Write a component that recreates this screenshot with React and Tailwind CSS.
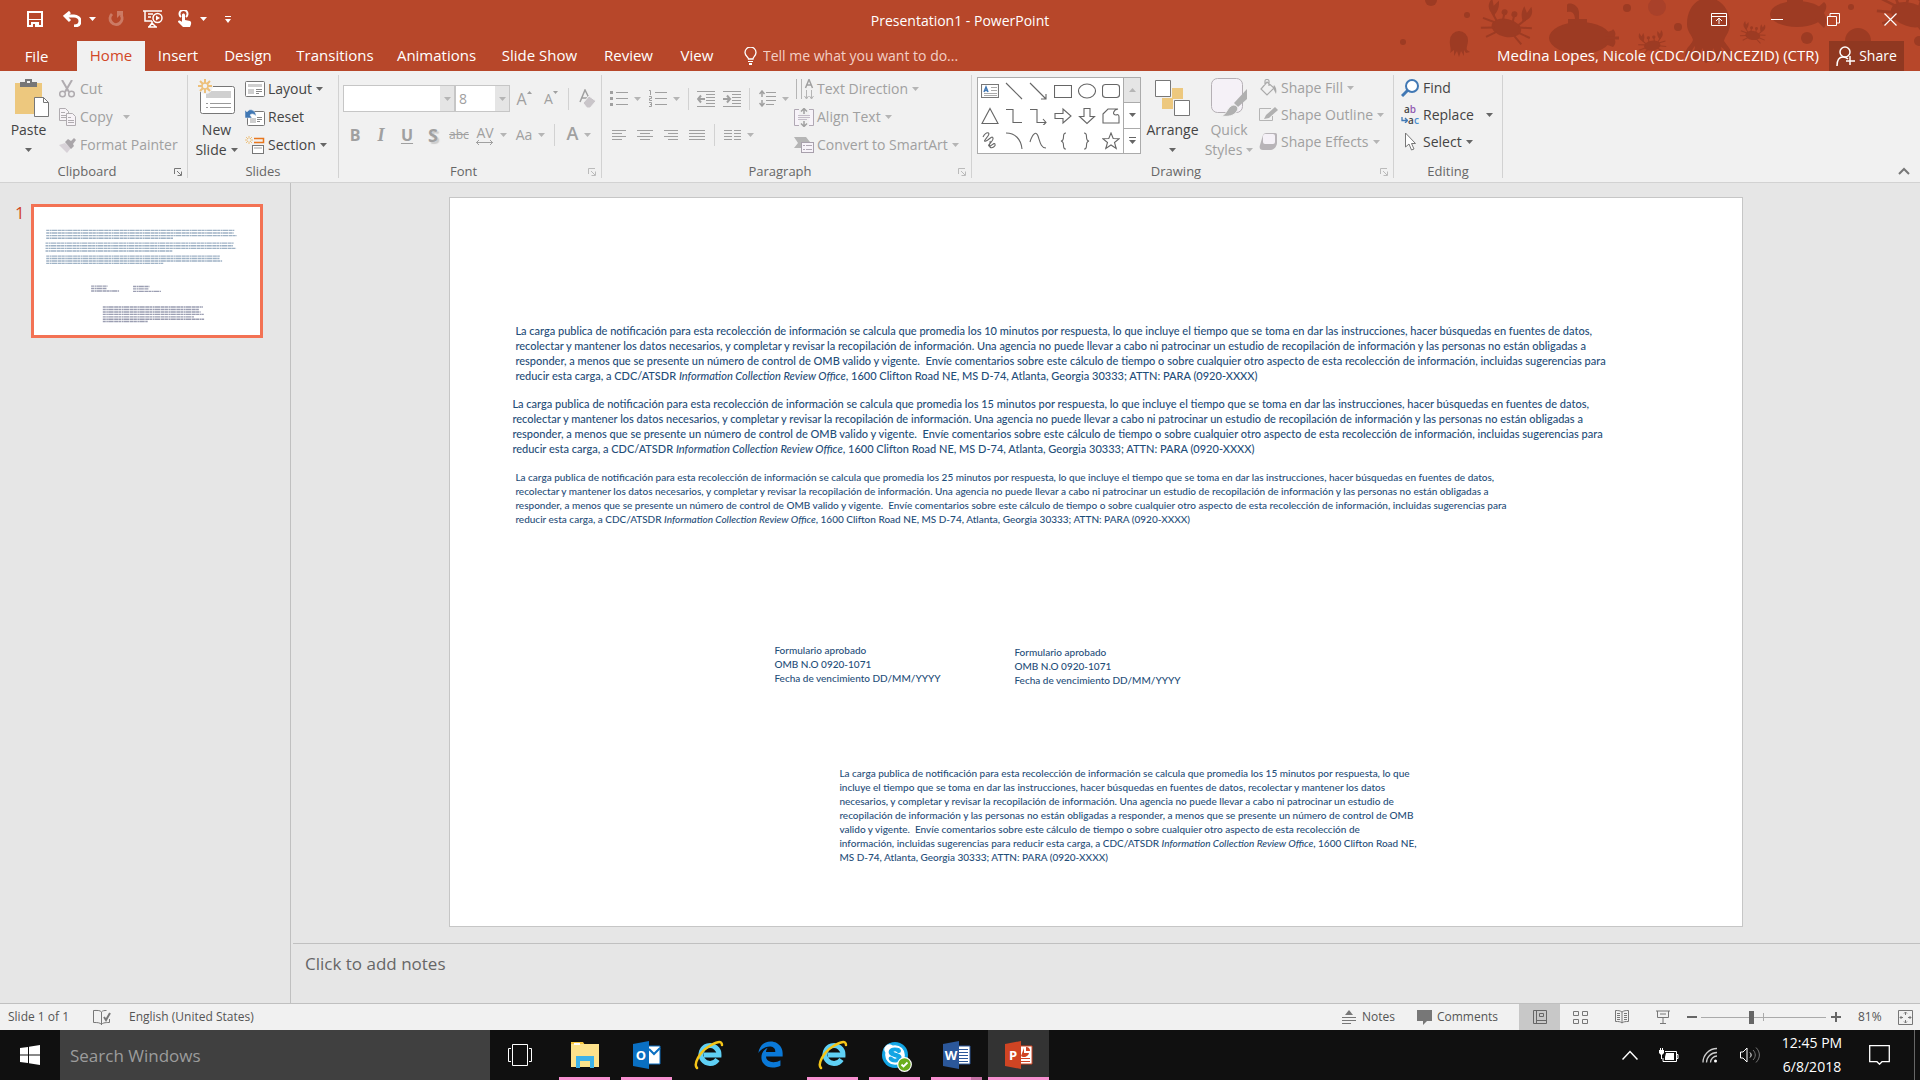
import { FaEdgeLegacy, FaSkype } from 'react-icons/fa';

const tabs = [
  { name: 'Home', width: 'w-[68px]', active: true },
  { name: 'Insert', width: 'w-[66px]' },
  { name: 'Design', width: 'w-[74px]' },
  { name: 'Transitions', width: 'w-[100px]' },
  { name: 'Animations', width: 'w-[103px]' },
  { name: 'Slide Show', width: 'w-[103px]' },
  { name: 'Review', width: 'w-[75px]' },
  { name: 'View', width: 'w-[62px]' },
];

const office = <i>Information Collection Review Office</i>;

const wideLines = minutes => [
  `La carga publica de notificación para esta recolección de información se calcula que promedia los ${minutes} minutos por respuesta, lo que incluye el tiempo que se toma en dar las instrucciones, hacer búsquedas en fuentes de datos,`,
  'recolectar y mantener los datos necesarios, y completar y revisar la recopilación de información. Una agencia no puede llevar a cabo ni patrocinar un estudio de recopilación de información y las personas no están obligadas a',
  'responder, a menos que se presente un número de control de OMB valido y vigente.  Envíe comentarios sobre este cálculo de tiempo o sobre cualquier otro aspecto de esta recolección de información, incluidas sugerencias para',
  <>reducir esta carga, a CDC/ATSDR {office}, 1600 Clifton Road NE, MS D-74, Atlanta, Georgia 30333; ATTN: PARA (0920-XXXX)</>,
];

const narrowLines = [
  'La carga publica de notificación para esta recolección de información se calcula que promedia los 15 minutos por respuesta, lo que',
  'incluye el tiempo que se toma en dar las instrucciones, hacer búsquedas en fuentes de datos, recolectar y mantener los datos',
  'necesarios, y completar y revisar la recopilación de información. Una agencia no puede llevar a cabo ni patrocinar un estudio de',
  'recopilación de información y las personas no están obligadas a responder, a menos que se presente un número de control de OMB',
  'valido y vigente.  Envíe comentarios sobre este cálculo de tiempo o sobre cualquier otro aspecto de esta recolección de',
  <>información, incluidas sugerencias para reducir esta carga, a CDC/ATSDR {office}, 1600 Clifton Road NE,</>,
  'MS D-74, Atlanta, Georgia 30333; ATTN: PARA (0920-XXXX)',
];

const formLines = ['Formulario aprobado', 'OMB N.O 0920-1071', 'Fecha de vencimiento DD/MM/YYYY'];

// x, y, width of every text line on the slide, for the thumbnail
const thumbLines = [
  [70, 134, 1077], [70, 149, 1073], [70, 164, 1091], [70, 179, 726],
  [66, 207, 1077], [66, 222, 1073], [66, 237, 1091], [66, 252, 726],
  [70, 281, 994], [70, 295, 992], [70, 309, 1007], [70, 323, 670],
  [327, 453, 94], [327, 467, 90], [327, 481, 160],
  [567, 455, 94], [567, 469, 90], [567, 483, 160],
  [394, 573, 573], [394, 587, 550], [394, 601, 560], [394, 615, 578], [394, 629, 522], [394, 643, 580], [394, 656, 257],
];

function Svg({ w, h, children, className = '' }) {
  return (
    <svg width={w} height={h} viewBox={`0 0 ${w} ${h}`} fill="none" aria-hidden="true" className={`shrink-0 ${className}`}>
      {children}
    </svg>
  );
}

function Caret({ className = 'text-[#666]' }) {
  return (
    <Svg w={7} h={4} className={className}>
      <path d="M0 0h7L3.5 4z" fill="currentColor" />
    </Svg>
  );
}

/* ---------- Title bar ---------- */

function Crab({ x, y, s = 1, r = 0 }) {
  return (
    <g transform={`translate(${x} ${y}) rotate(${r}) scale(${s})`}>
      <ellipse cx="0" cy="3" rx="15" ry="9" />
      <circle cx="-5" cy="-12" r="3" />
      <circle cx="5" cy="-12" r="3" />
      <path d="M-14-6c-8-4-10-10-6-17l3 7 4-6c2 6 1 10-1 14zM14-6c8-4 10-10 6-17l-3 7-4-6c-2 6-1 10 1 14z" />
      <path d="M-5-12v8M5-12v8M-12 0l-13-2M-12 5l-13 3M-9 9l-9 7M12 0l13-2M12 5l13 3M9 9l9 7M-17-9l6 7M17-9l-6 7" fill="none" stroke="currentColor" strokeWidth="2" />
    </g>
  );
}

function SeaLife() {
  return (
    <svg width="520" height="71" viewBox="0 0 520 71" fill="currentColor" aria-hidden="true" className="absolute right-0 top-0 text-[#9d3b23]">
      <circle cx="31" cy="0" r="6" />
      <circle cx="3" cy="42" r="3" />
      <circle cx="67" cy="15" r="3" />
      <path d="M50 40a9 9 0 0 1 18 0c0 5-2 7-1 10l3 2-4 1-2-3v6l-3-5-2 6-2-6-3 5v-6l-4 3c2-4-1-8 0-13z" />
      <Crab x={107} y={25} r={12} />
      <ellipse cx="180" cy="38" rx="31" ry="16" />
      <path d="M168 19h19v8h-19zM167 12V5c0-3 11-2 12 7v8h-4c0-7-3-9-8-8zM205 33l8-3 2 8-2 9-8-3zM213 29c3 3 3 6 1 9 2 3 2 6-1 9-2-3-2-6 0-9-2-3-2-6 0-9z" />
      <path d="M205 38h14" stroke="currentColor" strokeWidth="3" />
      <circle cx="227" cy="8" r="4" />
      <Crab x={252} y={44} s={0.55} r={-8} />
      <circle cx="257" cy="7" r="9" className="text-[#a9412a]" />
      <circle cx="278" cy="27" r="4" />
      <path d="M287 24c0-14 8-26 21-26s22 12 22 26c0 8-5 12-6 17 4 6 8 8 8 17-6 0-6-9-11-11 2 8 2 14-4 16-3-5 0-10-4-15-1 8-2 13-7 15-5-3-2-9-3-15-4 5-4 13-11 12-1-7 3-9 3-14-4 4-3 10-10 11 0-10 6-11 8-17-1-5-6-8-6-16z" />
      <Crab x={353} y={34} s={0.5} r={10} />
      <ellipse cx="397" cy="14" rx="27" ry="13" />
      <path d="M387 0h16v4h-16zM415 10l9-8c4 3 2 8 0 11 3 5 3 10 0 15l-9-9z" />
      <circle cx="407" cy="38" r="6" />
      <circle cx="451" cy="7" r="3" />
      <path d="M445 41a13 13 0 0 1 26 0z" />
      <Crab x={511} y={11} s={1.3} r={18} />
      <circle cx="519" cy="41" r="5" />
    </svg>
  );
}

function TitleBar() {
  return (
    <div className="relative flex h-[41px] items-center justify-between">
      <div className="flex items-center pl-[27px] pb-[3px] text-white">
        <button aria-label="Save">
          <Svg w={16} h={16}>
            <path d="M1 1h14v14H1z" stroke="#fff" strokeWidth="2" />
            <path d="M1 8h14v1H1zM4 11h8v4H4z" fill="#fff" />
            <path d="M6 13h2v3H6z" fill="#b7472a" />
          </Svg>
        </button>
        <button aria-label="Undo" className="ml-5">
          <Svg w={18} h={16}>
            <path d="M7 1L2 5l5 5M2 5h9c3 0 6 2 6 5s-2 5-6 5" stroke="#fff" strokeWidth="3" />
          </Svg>
        </button>
        <button aria-label="Undo history" className="ml-2"><Caret className="text-white" /></button>
        <button aria-label="Repeat" className="ml-3" disabled>
          <Svg w={16} h={16} className="text-[#cc7a64]">
            <path d="M4 3a6 6 0 1 0 9 1" stroke="currentColor" strokeWidth="3" />
            <path d="M9 0h6v6l-3-2-3 3z" fill="currentColor" />
          </Svg>
        </button>
        <button aria-label="Start from beginning" className="ml-[19px]">
          <Svg w={20} h={18}>
            <path d="M0 1h19M2 1v10h7M5 4h5M5 7h3M9 11v2M5 17h9M9 13l-3 4M9 13l4 4" stroke="#fff" strokeWidth="1.5" />
            <circle cx="14.500" cy="8" r="4.500" stroke="#fff" strokeWidth="1.500" />
            <path d="M13 5.500v5l4-2.500z" fill="#fff" />
          </Svg>
        </button>
        <button aria-label="Touch/Mouse mode" className="ml-[15px]">
          <Svg w={14} h={18}>
            <path d="M3 7a4 4 0 1 1 5 0" stroke="#fff" strokeWidth="2" />
            <path d="M4 5c0-2 3-2 3 0v5l5 1c2 1 1 4 0 6H5L0 12c0-2 2-2 4 0z" fill="#fff" />
          </Svg>
        </button>
        <button aria-label="Touch/Mouse options" className="ml-2"><Caret className="text-white" /></button>
        <button aria-label="Customize Quick Access Toolbar" className="ml-[18px]">
          <Svg w={6} h={7}>
            <path d="M0 0h6v1H0zM0 3h6L3 7z" fill="#fff" />
          </Svg>
        </button>
      </div>
      <div className="absolute left-1/2 top-[11px] -translate-x-1/2 text-sm text-white">Presentation1 - PowerPoint</div>
      <div className="flex items-center gap-[44px] pb-[3px] pr-[23px]">
        <button aria-label="Ribbon display options">
          <Svg w={16} h={13}>
            <path d="M.5.5h15v12H.5zM.5 3.500h15M8 5v6M5 8l3-3 3 3" stroke="#fff" />
          </Svg>
        </button>
        <button aria-label="Minimize">
          <Svg w={12} h={13}><path d="M0 6.500h12" stroke="#fff" /></Svg>
        </button>
        <button aria-label="Restore">
          <Svg w={13} h={13}><path d="M.5 3.500h9v9h-9zM3 3V.5h9.500V10H10" stroke="#fff" /></Svg>
        </button>
        <button aria-label="Close">
          <Svg w={13} h={13}><path d="M.5.5l12 12M12.500.5l-12 12" stroke="#fff" strokeWidth="1.200" /></Svg>
        </button>
      </div>
    </div>
  );
}

function TabBar() {
  return (
    <nav className="relative flex h-[30px] text-[15px] text-white">
      <button className="w-[77px] pr-1">File</button>
      {tabs.map(tab => (
        <button
          key={tab.name}
          className={`${tab.width} shrink-0 whitespace-nowrap pb-[2px] ${tab.active ? 'bg-[#f1f1f1] text-[#d24726]' : ''}`}
        >
          {tab.name}
        </button>
      ))}
      <label className="ml-4 flex items-center gap-[5px]">
        <Svg w={14} h={18}>
          <path d="M4.500 12c0-2-3.500-3-3.500-6.500a5.500 5.500 0 0 1 11 0C12 9 9 10 9 12z" stroke="#fff" strokeWidth="1.300" />
          <path d="M4 14h5v1H4zM5 16h3v2H5z" fill="#fff" />
        </Svg>
        <input
          placeholder="Tell me what you want to do..."
          className="w-56 bg-transparent text-sm outline-none placeholder:text-[#f3d0c6]"
        />
      </label>
      <div className="ml-auto flex items-center">
        <span className="whitespace-nowrap pb-[2px]">Medina Lopes, Nicole (CDC/OID/NCEZID) (CTR)</span>
        <button className="ml-[10px] mr-4 flex h-full w-[75px] items-center justify-center gap-1 bg-[#903821] text-sm">
          <Svg w={19} h={20}>
            <circle cx="9" cy="6" r="5" stroke="#fff" strokeWidth="1.500" />
            <path d="M1 20c0-5 2-9 6-9 2 0 3 0 5 2M14 10v9M10 15h9" stroke="#fff" strokeWidth="1.500" />
          </Svg>
          Share
        </button>
      </div>
    </nav>
  );
}

/* ---------- Ribbon ---------- */

function Group({ label, width, launcher, children }) {
  return (
    <>
      <section className={`flex shrink-0 flex-col ${width}`} aria-label={label}>
        <div className="flex h-[90px] shrink-0">{children}</div>
        <div className="flex h-[22px] items-center">
          <span className="flex-1 text-center text-[13px] text-[#666]">{label}</span>
          {launcher && (
            <button aria-label={`${label} settings`} className={`mr-[5px] ${launcher}`}>
              <Svg w={8} h={8}>
                <path d="M.5 6V.5H7M3 3l4 4M7.500 3.500v4h-4" stroke="currentColor" />
              </Svg>
            </button>
          )}
        </div>
      </section>
      <div className="my-1 w-px shrink-0 bg-[#d2d2d2]" />
    </>
  );
}

function Item({ icon, label, caret, disabled, height = 'h-7', gap = 'gap-1' }) {
  return (
    <button disabled={disabled} className={`flex items-center whitespace-nowrap ${height} ${disabled ? 'text-[#a0a0a0]' : 'text-[#444]'}`}>
      <span className="mr-[3px] flex w-5 justify-center">{icon}</span>
      <span className={`flex items-center ${gap}`}>
        {label}
        {caret && <Caret className={disabled ? 'text-[#b5b5b5]' : 'text-[#666]'} />}
      </span>
    </button>
  );
}

function BigButton({ icon, top, bottom, width, disabled }) {
  return (
    <button disabled={disabled} className={`flex shrink-0 flex-col items-center pt-1 leading-5 ${width} ${disabled ? 'text-[#a0a0a0]' : 'text-[#444]'}`}>
      <span className="flex h-[45px] items-center">{icon}</span>
      <span>{top}</span>
      <span className="flex h-5 items-center gap-1">
        {bottom}
        <Caret className={disabled ? 'text-[#b5b5b5]' : 'text-[#666]'} />
      </span>
    </button>
  );
}

function Tool({ label, caret, width = 'w-[26px]', children }) {
  return (
    <button disabled aria-label={label} className={`flex h-full shrink-0 items-center justify-center gap-[6px] text-[#a0a0a0] ${width}`}>
      {children}
      {caret && <Caret className="text-[#b5b5b5]" />}
    </button>
  );
}

function Divider() {
  return <span className="mx-1 h-[22px] w-px shrink-0 bg-[#d2d2d2]" />;
}

function Lines({ d, w = 16, h = 14, children }) {
  return (
    <Svg w={w} h={h}>
      <path d={d} stroke="currentColor" />
      {children}
    </Svg>
  );
}

function ClipboardGroup() {
  return (
    <Group label="Clipboard" width="w-[187px]" launcher="text-[#777]">
      <BigButton
        width="w-[57px]"
        top="Paste"
        icon={
          <Svg w={40} h={38}>
            <g transform="translate(6 0)">
              <path d="M0 4h27v31H0z" fill="#edc87e" />
              <path d="M5 3h5V0h7v3h5v5H5z" fill="#777" />
              <path d="M12 2h3v2h-3z" fill="#f1f1f1" />
              <path d="M19.500 18.500h9l5 5v14h-14z" fill="#fff" stroke="#777" />
              <path d="M28.500 18.500v5h5" stroke="#777" />
            </g>
          </Svg>
        }
      />
      <div className="flex flex-col items-start pt-1">
        <Item
          disabled
          label="Cut"
          icon={
            <Svg w={16} h={18}>
              <path d="M3 0l7 12M13 0L6 12" stroke="#b0acb0" strokeWidth="2" />
              <circle cx="3.500" cy="14" r="2.800" stroke="#b0acb0" strokeWidth="1.500" />
              <circle cx="12.500" cy="14" r="2.800" stroke="#b0acb0" strokeWidth="1.500" />
            </Svg>
          }
        />
        <Item
          disabled
          caret
          gap="gap-[10px]"
          label="Copy"
          icon={
            <Svg w={17} h={18}>
              <path d="M.5.5h6l3 3v9h-9z" fill="#f7f3f7" stroke="#b0acb0" />
              <path d="M7.500 5.500h6l3 3v9h-9z" fill="#f7f3f7" stroke="#b0acb0" />
              <path d="M2 4.500h4M2 7.500h5M2 9.500h5M9 9.500h3M9 12.500h6M9 14.500h6" stroke="#b0acb0" />
            </Svg>
          }
        />
        <Item
          disabled
          label="Format Painter"
          icon={
            <Svg w={17} h={15}>
              <path d="M0 7l6-2 6 5-4 5z" fill="#d8d2d8" />
              <path d="M6 4l3-3 3 2 3-3 2 2-3 4 1 2-3 3z" fill="#aaa6aa" />
            </Svg>
          }
        />
      </div>
    </Group>
  );
}

function SlidesGroup() {
  return (
    <Group label="Slides" width="w-[150px]">
      <BigButton
        width="w-[57px]"
        top="New"
        bottom="Slide"
        icon={
          <Svg w={38} h={37}>
            <rect x="2.500" y="7.500" width="34" height="27" rx="2" fill="#fff" stroke="#777" />
            <path d="M8 12h25v7H8z" fill="#d0d0d0" />
            <path d="M8 24.500h2M12 24.500h21M8 28.500h2M12 28.500h21" stroke="#999" />
            <circle cx="7.500" cy="7.500" r="7.500" fill="#f1f1f1" />
            <path d="M7 0v14M0 7h14M2 2l10 10M12 2L2 12" stroke="#edc07a" strokeWidth="2" />
            <circle cx="7" cy="7" r="3" fill="#f1f1f1" stroke="#edc07a" strokeWidth="1.500" />
          </Svg>
        }
      />
      <div className="flex flex-col items-start pt-1">
        <Item
          caret
          label="Layout"
          icon={
            <Svg w={20} h={16}>
              <rect x=".5" y=".5" width="19" height="15" rx="1" fill="#fff" stroke="#777" />
              <path d="M3 3h14v3H3zM3 8h6v5H3z" fill="#cfcfcf" />
              <path d="M11 8.500h6M11 10.500h6M11 12.500h3" stroke="#888" />
            </Svg>
          }
        />
        <Item
          label="Reset"
          icon={
            <Svg w={20} h={17}>
              <rect x="2.500" y="2.500" width="17" height="14" rx="1" fill="#fff" stroke="#777" />
              <path d="M5 9h6v5H5z" fill="#cfcfcf" />
              <path d="M12 8.500h5M12 10.500h5M12 12.500h3" stroke="#888" />
              <path d="M0 1v8h7L5 6c2-2 4-1 6 1 0-4-3-7-7-6L2 3z" fill="#4178b4" stroke="#f1f1f1" strokeWidth=".5" />
            </Svg>
          }
        />
        <Item
          caret
          label="Section"
          icon={
            <Svg w={20} h={18}>
              <path d="M4 0v8M0 4h8M1 1l6 6M7 1L1 7" stroke="#edc07a" />
              <circle cx="4" cy="4" r="1.500" fill="#f1f1f1" />
              <path d="M9 2.500h9.500v4H9" stroke="#e8761c" strokeWidth="1.500" />
              <rect x="7.500" y="9.500" width="11" height="8" fill="#fff" stroke="#777" />
              <path d="M9 11h8v2H9z" fill="#cfcfcf" />
            </Svg>
          }
        />
      </div>
    </Group>
  );
}

function SelectBox({ label, value, width }) {
  return (
    <div className={`flex h-[27px] border border-[#c6c6c6] bg-white ${width}`}>
      <select disabled aria-label={label} className="min-w-0 flex-1 appearance-none bg-white pl-[3px] text-sm text-[#a0a0a0] opacity-100">
        <option>{value}</option>
      </select>
      <span className="flex w-[14px] items-center justify-center bg-[#e5e5e5]"><Caret className="text-[#b5b5b5]" /></span>
    </div>
  );
}

function FontGroup() {
  return (
    <Group label="Font" width="w-[262px]" launcher="text-[#bbb]">
      <div className="flex flex-col pt-[14px]">
        <div className="flex h-[27px] items-center pl-1">
          <SelectBox label="Font" value="" width="w-[112px]" />
          <SelectBox label="Font size" value="8" width="w-[55px]" />
          <Tool label="Increase font size" width="w-[28px]">
            <span className="flex items-start text-base leading-4">A<Svg w={5} h={3}><path d="M0 3h5L2.500 0z" fill="currentColor" /></Svg></span>
          </Tool>
          <Tool label="Decrease font size">
            <span className="flex items-start text-sm leading-4">A<Svg w={5} h={3}><path d="M0 0h5L2.500 3z" fill="currentColor" /></Svg></span>
          </Tool>
          <Divider />
          <Tool label="Clear all formatting" width="w-[30px]">
            <Svg w={18} h={19}>
              <path d="M1 13L6 1l4 8M3 9h5" stroke="#a0a0a0" strokeWidth="1.500" />
              <path d="M4 14l6-7 7 5-6 7h-3z" fill="#c9c5c9" stroke="#f1f1f1" />
            </Svg>
          </Tool>
        </div>
        <div className="mt-[10px] flex h-[26px] items-center pl-[3px] text-base">
          <Tool label="Bold"><b>B</b></Tool>
          <Tool label="Italic"><i className="font-['Liberation_Serif',serif] text-lg font-bold">I</i></Tool>
          <Tool label="Underline"><b className="underline underline-offset-2">U</b></Tool>
          <Tool label="Text shadow"><b className="text-lg [text-shadow:2px_2px_1px_#ccc]">S</b></Tool>
          <Tool label="Strikethrough"><s className="text-xs">abc</s></Tool>
          <Tool label="Character spacing" caret width="w-[39px]">
            <span className="flex flex-col items-center text-sm leading-[14px]">
              AV
              <Svg w={17} h={5}><path d="M0 2.500h17M3 0L.5 2.500 3 5M14 0l2.500 2.500L14 5" stroke="currentColor" /></Svg>
            </span>
          </Tool>
          <Tool label="Change case" caret width="w-[39px]"><span className="text-sm">Aa</span></Tool>
          <Divider />
          <Tool label="Font color" caret width="w-[40px]"><span className="pb-1 text-lg font-semibold">A</span></Tool>
        </div>
      </div>
    </Group>
  );
}

function ParagraphGroup() {
  return (
    <Group label="Paragraph" width="w-[369px]" launcher="text-[#bbb]">
      <div className="flex w-[192px] flex-col pl-1 pt-[14px]">
        <div className="flex h-[27px] items-center">
          <Tool label="Bullets" caret width="w-[39px]">
            <Lines w={18} h={17} d="M6 2.500h12M6 8.500h12M6 14.500h12">
              <path d="M0 1h3v3H0zM0 7h3v3H0zM0 13h3v3H0z" fill="currentColor" />
            </Lines>
          </Tool>
          <Tool label="Numbering" caret width="w-[39px]">
            <Lines w={18} h={17} d="M6 2.500h12M6 8.500h12M6 14.500h12M0 .5h1.500V5M0 6.500h2.500v2H.5v2H3M0 12.500h2.500v4H0M1 14.500h2" />
          </Tool>
          <Divider />
          <Tool label="Decrease list level">
            <Lines w={18} h={16} d="M0 .5h18M9 3.500h9M9 6.500h9M9 9.500h9M9 12.500h9M0 15.500h18">
              <path d="M8 8H1M4 4.500L1 8l3 3.500" stroke="currentColor" strokeWidth="2" />
            </Lines>
          </Tool>
          <Tool label="Increase list level">
            <Lines w={18} h={16} d="M0 .5h18M9 3.500h9M9 6.500h9M9 9.500h9M9 12.500h9M0 15.500h18">
              <path d="M0 8h7M4 4.500L7 8l-3 3.500" stroke="currentColor" strokeWidth="2" />
            </Lines>
          </Tool>
          <Divider />
          <Tool label="Line spacing" caret width="w-[39px]">
            <Lines w={17} h={17} d="M7 2.500h10M7 6.500h10M7 10.500h10M7 14.500h8">
              <path d="M3 1v6M3 10v6M.5 4L3 1l2.500 3M.5 13L3 16l2.500-3" stroke="currentColor" strokeWidth="1.500" />
            </Lines>
          </Tool>
        </div>
        <div className="mt-[10px] flex h-[26px] items-center">
          <Tool label="Align left"><Lines d="M1 2.500h14M1 5.500h10M1 8.500h14M1 11.500h10" /></Tool>
          <Tool label="Center"><Lines d="M0 2.500h16M3 5.500h10M0 8.500h16M3 11.500h10" /></Tool>
          <Tool label="Align right"><Lines d="M1 2.500h14M5 5.500h10M1 8.500h14M5 11.500h10" /></Tool>
          <Tool label="Justify"><Lines d="M0 2.500h16M0 5.500h16M0 8.500h16M0 11.500h16" /></Tool>
          <Divider />
          <Tool label="Columns" caret width="w-[39px]">
            <Lines w={17} d="M0 2.500h8M10 2.500h7M0 5.500h8M10 5.500h7M0 8.500h8M10 8.500h7M0 11.500h8M10 11.500h7" />
          </Tool>
        </div>
      </div>
      <div className="flex flex-col items-start pt-1">
        <Item
          disabled
          caret
          label="Text Direction"
          icon={
            <Svg w={19} h={20}>
              <path d="M1.500 0v20M6.500 0v20M11.500 11v9M16.500 11v9M9.500 17l2 3 2-3M14.500 17l2 3 2-3" stroke="#b5b5b5" />
              <path d="M10.500 9L14 .5 17.500 9M12 6h4" stroke="#a0a0a0" strokeWidth="1.500" />
            </Svg>
          }
        />
        <Item
          disabled
          caret
          label="Align Text"
          icon={
            <Svg w={20} h={19}>
              <path d="M5 1.500H.5v16H5M15 1.500h4.500v16H15" fill="#f7f3f9" stroke="#b0a8b4" />
              <path d="M4 7.500h12M4 9.500h12M4 11.500h9" stroke="#c4bcc8" />
              <path d="M10 6V1M7 3.500L10 .5l3 3M10 13v5M7 15.500l3 3 3-3" stroke="#a0a0a0" strokeWidth="1.500" />
            </Svg>
          }
        />
        <Item
          disabled
          caret
          label="Convert to SmartArt"
          icon={
            <Svg w={20} h={16}>
              <path d="M0 0h12l4 5H7v6H0l4-5z" fill="#b5b5b5" />
              <rect x="7.500" y="5.500" width="12" height="10" fill="#f7f3f9" stroke="#a8a0ac" />
              <path d="M9 8.500h2M12 8.500h6M9 12.500h2M12 12.500h6" stroke="#b0a8b4" />
            </Svg>
          }
        />
      </div>
    </Group>
  );
}

const shapes = [
  <><path d="M.5 2.500h17v13H.5z" stroke="#777" /><path d="M10 5.500h6M10 8.500h6M3 11.500h13M3 13.500h13" stroke="#aaa" /><path d="M3 10l2-5 2 5M4 8.500h3" stroke="#4178b4" strokeWidth="1.500" /></>,
  <path d="M1 1l16 16" />,
  <path d="M1 1l16 16M17 12v5h-5" />,
  <path d="M.5 3.500h17v12H.5z" />,
  <ellipse cx="9" cy="9" rx="8.500" ry="7" />,
  <rect x=".5" y="2.500" width="17" height="13" rx="3" />,
  <path d="M9 1.500l8 15H1z" />,
  <path d="M1 2.500h7v13h9" />,
  <path d="M1 2.500h7v13h9M14 12l3 3.500-3 3" />,
  <path d="M1 6.500h8v-4.500l8 7-8 7v-4.500H1z" />,
  <path d="M6 1.500h6v8h4.500L9 16.500 1.500 9.500H6z" />,
  <path d="M1 7l5-5h10c-5 1-6 6-2 6 2-1 3 0 3 2v6H1z" />,
  <path d="M2 5c3-6 8-5 5-1s-5 6-2 5 6-6 7-3-6 7-4 8 5-4 6-2-3 5-5 3 1-4 0-6" />,
  <path d="M1 1c9 0 15 6 16 16" />,
  <path d="M1 10C3 3 7-2 9 4s3 12 8 12" />,
  <path d="M12 1c-5 0 0 7-5 8 5 1 0 8 5 8" />,
  <path d="M6 1c5 0 0 7 5 8-5 1 0 8-5 8" />,
  <path d="M9 1l2.200 5.500 6 .3-4.700 3.700 1.700 6L9 13l-5.200 3.500 1.700-6L.8 6.800l6-.3z" />,
];

function DrawingGroup() {
  return (
    <Group label="Drawing" width="w-[421px]" launcher="text-[#bbb]">
      <div className="ml-[5px] mt-[6px] flex h-[77px] w-[164px] shrink-0 border border-[#ababab] bg-white">
        <div className="grid flex-1 grid-cols-6 grid-rows-3 place-items-center">
          {shapes.map((shape, i) => (
            <button key={i} aria-label={`Shape ${i + 1}`}>
              <Svg w={18} h={18}><g stroke="#666" strokeWidth="1.100">{shape}</g></Svg>
            </button>
          ))}
        </div>
        <div className="flex w-[17px] flex-col divide-y divide-[#ababab] border-l border-[#ababab]">
          <button aria-label="Scroll up" className="flex flex-1 items-center justify-center bg-[#e5e5e5]"><Caret className="rotate-180 text-[#b5b5b5]" /></button>
          <button aria-label="Scroll down" className="flex flex-1 items-center justify-center"><Caret /></button>
          <button aria-label="More shapes" className="flex flex-1 flex-col items-center justify-center gap-[2px]">
            <span className="h-px w-[7px] bg-[#666]" />
            <Caret />
          </button>
        </div>
      </div>
      <BigButton
        width="w-[63px]"
        top="Arrange"
        icon={
          <Svg w={35} h={36}>
            <path d="M17 8h11v11H17zM7 18h11v11H7z" fill="#edc87e" />
            <path d="M.5.5h15v16H.5zM19.500 20.500h15v15h-15z" fill="#fff" stroke="#777" />
          </Svg>
        }
      />
      <BigButton
        width="w-[50px]"
        disabled
        top="Quick"
        bottom="Styles"
        icon={
          <Svg w={37} h={39}>
            <rect x=".5" y=".5" width="31" height="34" rx="6" fill="#f5f1f7" stroke="#b5b0b5" />
            <path d="M36 11v10l-9 8-4-4z" fill="#b0b0b0" />
            <path d="M10 38c6-1 6-9 12-11 4 0 6 3 4 6-3 5-9 6-16 5z" fill="#b0b0b0" stroke="#f1f1f1" />
          </Svg>
        }
      />
      <div className="ml-1 flex flex-col items-start pt-[3px]">
        <Item
          disabled
          caret
          height="h-[27px]"
          label="Shape Fill"
          icon={
            <Svg w={17} h={17}>
              <path d="M7 3l7 6-7 7-6-6zM5 6V2c0-2 4-2 4 0v5" stroke="#aaa" strokeWidth="1.200" />
              <path d="M14 6c2 2 3 5 2 9l-3-6z" fill="#aaa" />
            </Svg>
          }
        />
        <Item
          disabled
          caret
          height="h-[27px]"
          label="Shape Outline"
          icon={
            <Svg w={19} h={15}>
              <path d="M12 1.500H.5v12h13V9" stroke="#b5b5b5" />
              <path d="M5 12l2-4 9-8 3 3-9 8z" fill="#b0b0b0" />
            </Svg>
          }
        />
        <Item
          disabled
          caret
          height="h-[27px]"
          label="Shape Effects"
          icon={
            <Svg w={18} h={17}>
              <path d="M4 2c1-2 3-2 5-2h7c2 0 2 1 2 3v7c0 3-3 7-6 7H4c-3 0-4-2-3-5z" fill="#b8b4b8" />
              <rect x="4" y="1" width="12" height="10" rx="2" fill="#f5f1f7" />
            </Svg>
          }
        />
      </div>
    </Group>
  );
}

function EditingGroup() {
  return (
    <Group label="Editing" width="w-[108px]">
      <div className="ml-[6px] flex flex-col items-start pt-[3px]">
        <Item
          height="h-[27px]"
          label="Find"
          icon={
            <Svg w={18} h={18}>
              <circle cx="11" cy="7" r="6" fill="#fff" stroke="#4178b4" strokeWidth="2" />
              <path d="M7 11l-6 6" stroke="#4178b4" strokeWidth="3" />
            </Svg>
          }
        />
        <Item
          caret
          gap="gap-3"
          height="h-[27px]"
          label="Replace"
          icon={
            <span className="flex flex-col text-[10px] font-semibold leading-[11px]">
              <span>a<span className="text-[#9259b0]">b</span></span>
              <span className="flex items-center">
                <Svg w={7} h={6}><path d="M1 0v3.500h5M4 1l2.500 2.500L4 6" stroke="#4178b4" strokeWidth="1.300" /></Svg>
                a<span className="text-[#4a90d0]">c</span>
              </span>
            </span>
          }
        />
        <Item
          caret
          height="h-[27px]"
          label="Select"
          icon={
            <Svg w={11} h={19}>
              <path d="M.5 1v14l3.500-3 2.500 6 2.500-1-2.500-5.500h4z" fill="#fff" stroke="#777" />
            </Svg>
          }
        />
      </div>
    </Group>
  );
}

function Ribbon() {
  return (
    <div className="flex h-28 shrink-0 border-b border-[#d2d2d2] bg-[#f1f1f1] text-sm">
      <ClipboardGroup />
      <SlidesGroup />
      <FontGroup />
      <ParagraphGroup />
      <DrawingGroup />
      <EditingGroup />
      <button aria-label="Collapse the ribbon" className="mb-[7px] ml-auto mr-[10px] self-end">
        <Svg w={12} h={8}><path d="M1 7l5-5 5 5" stroke="#777" strokeWidth="2" /></Svg>
      </button>
    </div>
  );
}

/* ---------- Workspace ---------- */

function TextBox({ lines, className }) {
  return (
    <div className={`absolute whitespace-pre ${className}`}>
      {lines.map((line, i) => (
        <p key={i}>{line}</p>
      ))}
    </div>
  );
}

function Slide() {
  return (
    <div className="relative aspect-[1295/731] h-full shrink-0 border border-[#c6c6c6] bg-white font-['Lato',sans-serif] font-medium text-[#1f4e79]">
      <TextBox lines={wideLines(10)} className="left-[65px] top-[125px] text-[11px] leading-[15px]" />
      <TextBox lines={wideLines(15)} className="left-[62px] top-[198px] text-[11px] leading-[15px]" />
      <TextBox lines={wideLines(25)} className="left-[65px] top-[272px] text-[10px] leading-[14px]" />
      <TextBox lines={formLines} className="left-[324px] top-[445px] text-[10px] leading-[14px]" />
      <TextBox lines={formLines} className="left-[564px] top-[447px] text-[10px] leading-[14px]" />
      <TextBox lines={narrowLines} className="left-[389px] top-[568px] text-[10px] leading-[14px]" />
    </div>
  );
}

function Thumbnails() {
  return (
    <aside className="flex w-[291px] shrink-0 items-start border-r border-[#c0c0c0] pl-[15px] pt-[21px]">
      <span className="w-4 text-[17px] leading-[18px] text-[#d24726]">1</span>
      <button aria-label="Slide 1" className="w-[232px] border-[3px] border-[#f37254] bg-white">
        <svg viewBox="0 0 1294 733" className="block w-full" aria-hidden="true">
          {thumbLines.map(([x, y, w], i) => (
            <path key={i} d={`M${x} ${y}h${w}`} stroke={i < 12 ? '#5f7f9f' : '#5a5f80'} strokeWidth="8" strokeDasharray="17 3 9 2 31 3 22 2" opacity="0.6" />
          ))}
        </svg>
      </button>
    </aside>
  );
}

function Workspace() {
  return (
    <div className="flex min-h-0 flex-1 bg-[#e6e6e6]">
      <Thumbnails />
      <div className="flex min-w-0 flex-1 flex-col pl-[2px]">
        <main className="flex min-h-0 flex-1 justify-center overflow-hidden pb-4 pr-[21px] pt-[14px]">
          <Slide />
        </main>
        <textarea
          aria-label="Notes"
          placeholder="Click to add notes"
          className="block h-[60px] shrink-0 resize-none border-t border-[#c0c0c0] bg-transparent pl-3 pt-2 text-[17px] leading-6 outline-none placeholder:text-[#666]"
        />
      </div>
    </div>
  );
}

/* ---------- Status bar ---------- */

function StatusBar() {
  return (
    <footer className="flex h-[27px] shrink-0 items-center border-t border-[#c0c0c0] bg-[#f1f1f1] text-xs text-[#555]">
      <span className="w-[85px] pl-2">Slide 1 of 1</span>
      <button aria-label="Spelling" className="ml-2 mr-[18px]">
        <Svg w={18} h={17}>
          <path d="M8.500 16V3C7 1 4 1.500.5 1.500v12c4 0 6.500 0 8 2 1-1.500 3-2 8-2V10M8.500 3c1-1.500 3-1.500 5-1.500" stroke="#777" />
          <path d="M11 8l2 3 4-7" stroke="#777" strokeWidth="2" />
        </Svg>
      </button>
      <span>English (United States)</span>
      <div className="ml-auto flex h-full items-center">
        <button className="flex items-center gap-[6px]">
          <Svg w={14} h={14}>
            <path d="M3 5h8L7 0z" fill="#777" />
            <path d="M0 7.500h14M0 10.500h14M0 13.500h9" stroke="#777" />
          </Svg>
          Notes
        </button>
        <button className="ml-[22px] flex items-center gap-[5px]">
          <Svg w={15} h={15}><path d="M0 0h15v11h-5l-4 4v-4H0z" fill="#777" /></Svg>
          Comments
        </button>
        <button aria-label="Normal view" className="ml-[21px] flex h-full w-[41px] items-center justify-center bg-[#c8c8c8]">
          <Svg w={14} h={14}><path d="M.5.5h13v13H.5zM3.500.5v13M4 10.500h9M6.500 3.500h4v3h-4z" stroke="#666" /></Svg>
        </button>
        <button aria-label="Slide sorter" className="flex h-full w-[41px] items-center justify-center">
          <Svg w={15} h={13}><path d="M.5.5h5v4h-5zM9.500.5h5v4h-5zM.5 8.500h5v4h-5zM9.500 8.500h5v4h-5z" stroke="#777" /></Svg>
        </button>
        <button aria-label="Reading view" className="flex h-full w-[41px] items-center justify-center">
          <Svg w={14} h={14}><path d="M7 13V2C5 .5 3 .5.500.5v11c3 0 5 0 6.500 1.500C8.500 11.500 11 11.500 13.500 11.500V.5C11 .5 9 .5 7 2M2 3.500h3M2 5.500h3M2 7.500h3M2 9.500h3M9 3.500h3M9 5.500h3M9 7.500h3M9 9.500h3" stroke="#777" /></Svg>
        </button>
        <button aria-label="Slide show" className="flex h-full w-[41px] items-center justify-center">
          <Svg w={14} h={14}><path d="M0 1h14M1.500 1v6.500h11V1M4 4h6M7 8v5M4 13.500h6" stroke="#777" /></Svg>
        </button>
        <button aria-label="Zoom out" className="ml-1">
          <Svg w={10} h={12}><path d="M0 6h10" stroke="#666" strokeWidth="2" /></Svg>
        </button>
        <div className="relative ml-1 flex items-center">
          <span className="absolute left-[62px] top-1 h-2 w-px bg-[#aaa]" />
          <input
            type="range"
            aria-label="Zoom"
            min="10"
            max="190"
            defaultValue="82"
            className="relative h-4 w-[125px] appearance-none bg-[linear-gradient(#aaa,#aaa)] bg-[length:100%_1px] bg-center bg-no-repeat [&::-webkit-slider-thumb]:h-[13px] [&::-webkit-slider-thumb]:w-[5px] [&::-webkit-slider-thumb]:appearance-none [&::-webkit-slider-thumb]:bg-[#666]"
          />
        </div>
        <button aria-label="Zoom in" className="ml-1">
          <Svg w={12} h={12}><path d="M1 6h10M6 1v10" stroke="#666" strokeWidth="2" /></Svg>
        </button>
        <span className="ml-4 w-[40px]">81%</span>
        <button aria-label="Fit slide to window" className="mr-[7px]">
          <Svg w={15} h={15}><path d="M.5.5h14v14H.5zM7.500 2v3M7.500 10v3M2 7.500h3M10 7.500h3M6 3.500L7.500 2 9 3.500M6 11.500L7.500 13 9 11.500M3.500 6L2 7.500 3.500 9M11.500 6L13 7.500 11.500 9" stroke="#777" /></Svg>
        </button>
      </div>
    </footer>
  );
}

/* ---------- Taskbar ---------- */

function OfficeIcon({ letter, color, children }) {
  return (
    <Svg w={28} h={28}>
      <path d="M13 5h14v18H13z" fill="#fff" stroke={color} />
      {children}
      <path d="M0 3l16-3v28L0 25z" fill={color} />
      <text x="8" y="19" textAnchor="middle" fontSize="13" fontWeight="700" fill="#fff">{letter}</text>
    </Svg>
  );
}

function ExplorerIcon() {
  return (
    <Svg w={30} h={30}>
      <path d="M23.500 19.500A9 9 0 1 1 25 15H10" stroke="#5fd0f5" strokeWidth="5" />
      <path d="M3 28C-1 24 6 12 14 7S28 0 28 5" stroke="#f5c518" strokeWidth="2.500" strokeLinecap="round" />
    </Svg>
  );
}

const apps = [
  {
    name: 'File Explorer',
    bar: 'bg-[#f78fd0] w-[51px]',
    icon: (
      <Svg w={28} h={28}>
        <path d="M0 1h12l2 3H0z" fill="#f8c63d" />
        <path d="M0 3h28v23H0z" fill="#fde28b" />
        <path d="M3 2h6v2H3z" fill="#fff" />
        <path d="M5 27V15h18v12h-4v-7h-10v7z" fill="#3db2e8" />
      </Svg>
    ),
  },
  {
    name: 'Outlook',
    bar: 'bg-[#f78fd0] w-[51px]',
    icon: (
      <OfficeIcon letter="O" color="#0a6fc2">
        <path d="M16 8l5 5 6-6" stroke="#0a6fc2" strokeWidth="2" />
      </OfficeIcon>
    ),
  },
  { name: 'Internet Explorer', icon: <ExplorerIcon /> },
  { name: 'Microsoft Edge', icon: <FaEdgeLegacy size={27} color="#0a79d8" /> },
  { name: 'Internet Explorer window', bar: 'bg-[#f78fd0] w-[51px]', icon: <ExplorerIcon /> },
  {
    name: 'Skype for Business',
    bar: 'bg-[#f78fd0] w-[51px]',
    icon: (
      <span className="relative">
        <FaSkype size={26} color="#fff" className="rounded-full bg-[#12a5e4] stroke-[#12a5e4] [stroke-width:24px]" />
        <Svg w={15} h={15} className="absolute -bottom-1 -right-1">
          <circle cx="7.500" cy="7.500" r="6.800" fill="#6bae1c" stroke="#fff" strokeWidth="1.200" />
          <path d="M4.500 7.500l2 2 4-4" stroke="#fff" strokeWidth="1.800" />
        </Svg>
      </span>
    ),
  },
  {
    name: 'Word',
    bar: 'bg-[#f78fd0] w-[51px] border-r-[11px] border-[#c470a4]',
    icon: (
      <OfficeIcon letter="W" color="#2b579a">
        <path d="M16 8.500h9M16 11.500h9M16 14.500h9M16 17.500h9M16 20.500h9" stroke="#2b579a" />
      </OfficeIcon>
    ),
  },
  {
    name: 'PowerPoint',
    active: true,
    bar: 'bg-[#f78fd0] w-[61px]',
    icon: (
      <OfficeIcon letter="P" color="#d04423">
        <path d="M16 17.500h9M16 20.500h9" stroke="#d04423" />
        <path d="M19 7v5h5a5 5 0 0 1-8 3M21 6a4 4 0 0 1 4 4h-4z" fill="#d04423" />
      </OfficeIcon>
    ),
  },
];

function Taskbar() {
  return (
    <div className="flex h-[50px] shrink-0 bg-[#101010] text-white">
      <button aria-label="Start" className="flex w-[60px] items-center justify-center">
        <Svg w={20} h={20}>
          <path d="M0 3l8-1v7.500H0zM9 1.800L20 0v9.500H9zM0 10.500h8V18l-8-1zM9 10.500h11V20L9 18.300z" fill="#fff" />
        </Svg>
      </button>
      <input
        type="search"
        aria-label="Search Windows"
        placeholder="Search Windows"
        className="w-[430px] bg-[#404040] pl-[10px] pt-[2px] text-[17px] outline-none placeholder:text-[#9c9c9c]"
      />
      <button aria-label="Task view" className="mr-1 flex w-[60px] items-center justify-center">
        <Svg w={24} h={22}>
          <path d="M4.500.5h15v21h-15zM3 4.500H.5v13H3M21 4.500h2.500v13H21" stroke="#fff" />
        </Svg>
      </button>
      {apps.map(app => (
        <button key={app.name} aria-label={app.name} className={`mr-px flex w-[61px] flex-col items-center ${app.active ? 'bg-[#333]' : ''}`}>
          <span className="flex flex-1 items-center pt-[2px]">{app.icon}</span>
          <span className={`h-[3px] ${app.bar || ''}`} />
        </button>
      ))}
      <div className="ml-auto flex items-center">
        <button aria-label="Show hidden icons" className="mr-[21px]">
          <Svg w={16} h={10}><path d="M.5 9.500L8 1.500l7.500 8" stroke="#fff" strokeWidth="1.500" /></Svg>
        </button>
        <Svg w={20} h={15} className="mr-[23px]">
          <path d="M6 3.500h11.500v10H4V10M17.500 6.500H19v4h-1.500" stroke="#fff" />
          <path d="M7 5h8v7H6V9z" fill="#fff" />
          <path d="M0 2h5v3l-2 2v4H2V7L0 5zM1 0h1v2H1zM3 0h1v2H3z" fill="#fff" />
        </Svg>
        <Svg w={16} h={16} className="mr-[22px]">
          <path d="M1 15.500C1 8 7 1.500 15 1.500M4.500 15.500C4.500 10 9 5.500 15 5.500M8.500 15.500c0-3.500 3-6.500 6.500-6.500" stroke="#ccc" strokeWidth="1.300" />
          <circle cx="13.500" cy="14" r="1.500" fill="#fff" />
        </Svg>
        <Svg w={20} h={18} className="mr-[21px]">
          <path d="M.5 6v6h2.500l4 4V2L3 6z" stroke="#fff" />
          <path d="M10 6.500c1.500 1.500 1.500 3.500 0 5" stroke="#fff" />
          <path d="M13 4c3 3 3 7 0 10M16 1.500c4.500 4.500 4.500 10.500 0 15" stroke="#777" />
        </Svg>
        <div className="w-[62px] text-center text-sm leading-6">
          <div className="whitespace-nowrap">12:45 PM</div>
          <div>6/8/2018</div>
        </div>
        <button aria-label="Notifications" className="ml-[26px] mr-6">
          <Svg w={21} h={20}><path d="M.7.7h19.600v16H13l-2.500 2.500L8 16.700H.7z" stroke="#fff" strokeWidth="1.300" /></Svg>
        </button>
        <span className="h-full w-[6px] border-l border-[#666]" />
      </div>
    </div>
  );
}

export default function App() {
  return (
    <div className="flex h-screen flex-col overflow-hidden font-['Open_Sans',sans-serif]">
      <header className="relative shrink-0 bg-[#b7472a]">
        <SeaLife />
        <TitleBar />
        <TabBar />
      </header>
      <Ribbon />
      <Workspace />
      <StatusBar />
      <Taskbar />
    </div>
  );
}
